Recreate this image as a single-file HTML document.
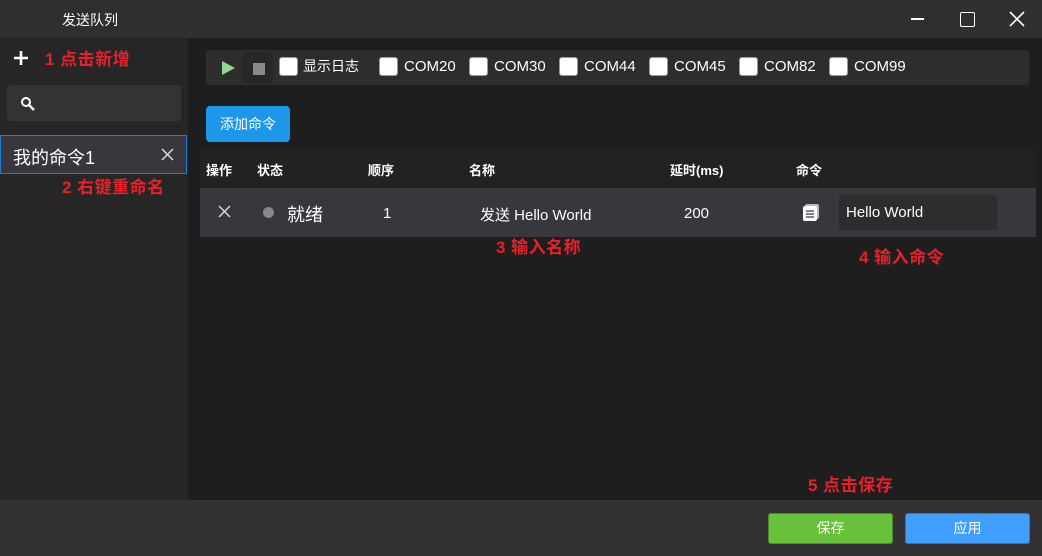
<!DOCTYPE html>
<html><head><meta charset="utf-8"><style>
*{margin:0;padding:0;box-sizing:border-box}
body{width:1042px;height:556px;background:#1e1e1e;position:relative;overflow:hidden;font-family:"Liberation Sans","Noto Sans CJK SC",sans-serif;color:#fff}
.a{position:absolute}
.red{color:#e8202a;font-weight:bold;font-size:17px;letter-spacing:0.5px}
.cb{position:absolute;top:57px;width:19px;height:19px;background:#fff;border:1px solid #999;border-radius:3px}
.cl{position:absolute;top:57px;font-size:15px;line-height:19px}
.th{position:absolute;top:160px;font-size:13px;font-weight:bold}
</style></head><body>
<div class="a" style="left:0;top:0;width:1042px;height:38px;background:#2f2f2f"></div>
<div class="a" style="left:62px;top:10px;font-size:14px">发送队列</div>
<div class="a" style="left:911px;top:18px;width:13px;height:1.5px;background:#fff"></div>
<div class="a" style="left:960px;top:12px;width:15px;height:15px;border:1.5px solid #fff;border-radius:2px"></div>
<svg class="a" style="left:1009px;top:11px" width="16" height="16"><path d="M1 1L15 15M15 1L1 15" stroke="#fff" stroke-width="1.6"/></svg>
<div class="a" style="left:0;top:38px;width:188px;height:462px;background:#262626"></div>
<svg class="a" style="left:13px;top:50px" width="16" height="16"><path d="M8 1V15M1 8H15" stroke="#fff" stroke-width="2.6"/></svg>
<div class="a red" style="left:45px;top:45px">1 点击新增</div>
<div class="a" style="left:7px;top:85px;width:174px;height:36px;background:#333;border-radius:3px"></div>
<svg class="a" style="left:20px;top:96px" width="16" height="16"><circle cx="6" cy="6" r="4" stroke="#fff" stroke-width="2" fill="none"/><path d="M9 9L14 14" stroke="#fff" stroke-width="2.4"/></svg>
<div class="a" style="left:0;top:135px;width:187px;height:39px;background:#38373d;border:1px solid #1a7dd8"></div>
<div class="a" style="left:13px;top:144px;font-size:18px">我的命令1</div>
<svg class="a" style="left:161px;top:148px" width="13" height="13"><path d="M1 1L12 12M12 1L1 12" stroke="#ddd" stroke-width="1.5"/></svg>
<div class="a red" style="left:62px;top:173px">2 右键重命名</div>
<div class="a" style="left:206px;top:50px;width:823px;height:35px;background:#2d2d2d;border-radius:3px"></div>
<svg class="a" style="left:221px;top:61px" width="14" height="14"><path d="M1 0L14 7L1 14Z" fill="#8ed98a"/></svg>
<div class="a" style="left:242px;top:52px;width:31px;height:31px;background:#272727;border-radius:5px"></div>
<div class="a" style="left:253px;top:63px;width:12px;height:12px;background:#8a8a8a"></div>
<div class="cb" style="left:279px"></div><div class="cl" style="left:303px;font-size:14px">显示日志</div>
<div class="cb" style="left:379px"></div><div class="cl" style="left:404px">COM20</div>
<div class="cb" style="left:469px"></div><div class="cl" style="left:494px">COM30</div>
<div class="cb" style="left:559px"></div><div class="cl" style="left:584px">COM44</div>
<div class="cb" style="left:649px"></div><div class="cl" style="left:674px">COM45</div>
<div class="cb" style="left:739px"></div><div class="cl" style="left:764px">COM82</div>
<div class="cb" style="left:829px"></div><div class="cl" style="left:854px">COM99</div>
<div class="a" style="left:206px;top:106px;width:84px;height:36px;background:#1c97ea;border-radius:4px;font-size:14px;line-height:36px;text-align:center">添加命令</div>
<div class="a" style="left:200px;top:148px;width:836px;height:40px;background:#222"></div>
<div class="th" style="left:206px">操作</div><div class="th" style="left:257px">状态</div><div class="th" style="left:368px">顺序</div><div class="th" style="left:469px">名称</div><div class="th" style="left:670px">延时(ms)</div><div class="th" style="left:796px">命令</div>
<div class="a" style="left:200px;top:188px;width:836px;height:49px;background:#38373d"></div>
<svg class="a" style="left:218px;top:205px" width="13" height="13"><path d="M1 1L12 12M12 1L1 12" stroke="#ddd" stroke-width="1.4"/></svg>
<div class="a" style="left:263px;top:207px;width:11px;height:11px;border-radius:50%;background:#888"></div>
<div class="a" style="left:287px;top:201px;font-size:18px">就绪</div>
<div class="a" style="left:383px;top:205px;font-size:15px">1</div>
<div class="a" style="left:480px;top:204px;font-size:15px">发送 Hello World</div>
<div class="a" style="left:684px;top:205px;font-size:15px">200</div>
<svg class="a" style="left:802px;top:203px" width="18" height="18"><rect x="3" y="1" width="14" height="15" rx="2" fill="#bbb"/><rect x="1" y="3" width="14" height="15" rx="2" fill="#fff"/><path d="M4 8H12M4 11H12M4 14H12" stroke="#38373d" stroke-width="1.3"/></svg>
<div class="a" style="left:839px;top:195px;width:158px;height:35px;background:#2d2d2d;border-radius:3px;font-size:15px;line-height:36px;padding-left:7px">Hello World</div>
<div class="a red" style="left:496px;top:233px">3 输入名称</div>
<div class="a red" style="left:859px;top:243px">4 输入命令</div>
<div class="a red" style="left:808px;top:471px">5 点击保存</div>
<div class="a" style="left:0;top:500px;width:1042px;height:56px;background:#323232"></div>
<div class="a" style="left:768px;top:513px;width:125px;height:31px;background:#67c23a;border:1px solid #4a8a32;border-radius:3px;font-size:14px;line-height:29px;text-align:center">保存</div>
<div class="a" style="left:905px;top:513px;width:125px;height:31px;background:#409eff;border:1px solid #2f75c0;border-radius:3px;font-size:14px;line-height:29px;text-align:center">应用</div>
</body></html>
